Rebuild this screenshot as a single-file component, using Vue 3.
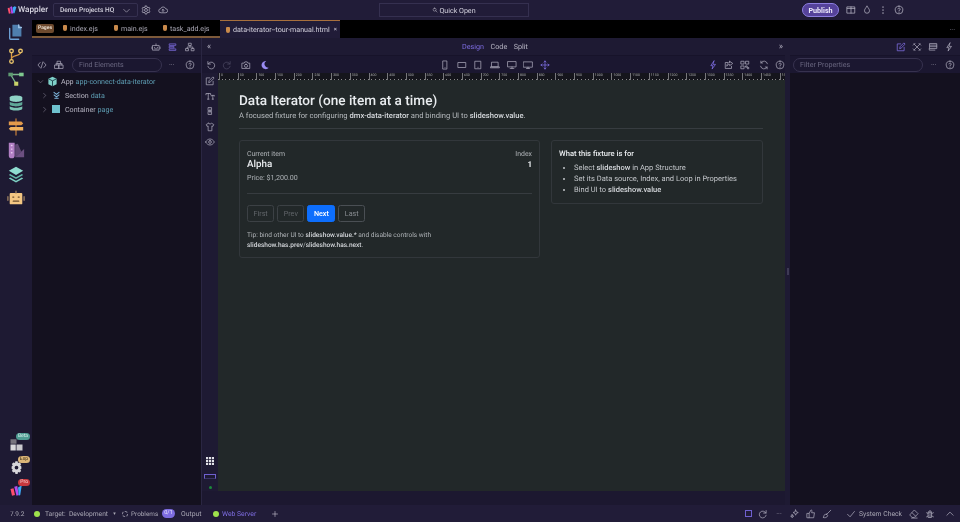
<template>
  <div class="app">
    <header class="topbar">
      <div class="brand">
        <svg class="logo" viewBox="0 0 16 16" aria-hidden="true">
          <path d="M1 5l3-1 2 9-3 1z" fill="#ff4f6d" />
          <path d="M5 3l3-1 2 11-3 1z" fill="#b44cf0" />
          <path d="M9 4l3-2 3 1-3 10-2 0z" fill="#3ca8f5" />
        </svg>
        <span>Wappler</span>
      </div>
      <div class="project">
        <span>Demo Projects HQ</span>
        <Ico name="chevron" class="project-chevron" />
      </div>
      <Ico name="gear" class="top-icon gear" />
      <Ico name="cloud" class="top-icon cloud" />
      <div class="quick-open">
        <Ico name="search" class="quick-icon" />
        <span>Quick Open</span>
      </div>
      <button class="publish">Publish</button>
      <Ico name="layout" class="top-icon pub-first" />
      <Ico name="drop" class="top-icon pub-next" />
      <Ico name="kebab" class="top-icon pub-next" />
      <Ico name="help" class="top-icon pub-next" />
    </header>

    <div class="workspace">
      <nav class="rail">
        <div v-for="item in railTop" :key="item.name" class="rail-cell">
          <svg viewBox="0 0 20 20" class="rail-icon" aria-hidden="true">
            <path v-for="p in item.paths" :key="p.d" :d="p.d" :fill="p.fill || 'none'" :stroke="p.stroke || 'none'" stroke-width="1.5" stroke-linecap="round" />
          </svg>
        </div>
        <div class="rail-gap"></div>
        <div v-for="item in railBottom" :key="item.name" class="rail-cell rail-cell-low">
          <svg viewBox="0 0 20 20" class="rail-icon" aria-hidden="true">
            <path v-for="p in item.paths" :key="p.d" :d="p.d" :fill="p.fill || 'none'" :stroke="p.stroke || 'none'" stroke-width="1.5" stroke-linecap="round" fill-rule="evenodd" />
          </svg>
          <span class="rail-badge" :class="item.badgeClass">{{ item.badge }}</span>
        </div>
      </nav>

      <div class="main">
        <div class="tabs">
          <div class="tabs-files">
            <span class="pages-badge">Pages</span>
            <span v-for="tab in tabs" :key="tab.name" class="tab" :style="{ width: tab.width + 'px' }">
              <i class="file-icon"></i>{{ tab.name }}
            </span>
          </div>
          <div class="tab-active">
            <i class="file-icon"></i>
            <span>data-iterator--tour-manual.html</span>
            <span class="tab-close">×</span>
          </div>
          <span class="tabs-more">···</span>
        </div>

        <div class="columns">
          <aside class="left-panel">
            <div class="head-row left-icons">
              <Ico name="robot" class="head-icon" />
              <Ico name="list" class="head-icon accent-icon" />
              <Ico name="sitemap" class="head-icon" />
            </div>
            <div class="tool-row">
              <Ico name="code" class="head-icon code-icon" />
              <Ico name="boxes" class="head-icon" />
              <div class="filter find">Find Elements</div>
              <span class="more">···</span>
              <Ico name="help" class="head-icon" />
            </div>
            <ul class="tree">
              <li class="tree-row">
                <Ico name="chevron" class="tree-chevron" />
                <svg class="tree-icon app-icon" viewBox="0 0 16 16" aria-hidden="true">
                  <path d="M8 1l6 3v8l-6 3-6-3V4z" fill="#7fd1c9" />
                  <path d="M2 4l6 3 6-3M8 7v8" fill="none" stroke="#14303a" stroke-width="1.2" />
                </svg>
                <span>App</span> <span class="tree-id">app-connect-data-iterator</span>
              </li>
              <li class="tree-row nested">
                <Ico name="chevronRight" class="tree-chevron" />
                <Ico name="section" class="tree-icon section-icon" />
                <span>Section</span> <span class="tree-id">data</span>
              </li>
              <li class="tree-row nested">
                <Ico name="chevronRight" class="tree-chevron" />
                <i class="container-box"></i>
                <span>Container</span> <span class="tree-id">page</span>
              </li>
            </ul>
          </aside>

          <section class="center">
            <div class="head-row center-head">
              <span class="collapse">«</span>
              <div class="view-modes">
                <span class="mode-active">Design</span>
                <span>Code</span>
                <span>Split</span>
              </div>
              <span class="collapse">»</span>
            </div>
            <div class="tool-row center-tools">
              <Ico name="undo" class="tool-icon undo" />
              <Ico name="redo" class="tool-icon redo" />
              <Ico name="camera" class="tool-icon camera" />
              <svg class="tool-icon moon" viewBox="0 0 16 16" aria-hidden="true">
                <path d="M10 1.5a6.6 6.6 0 1 0 4 11A6 6 0 0 1 10 1.5z" fill="#9a8cf2" />
              </svg>
              <div class="devices">
                <Ico v-for="d in devices" :key="d" :name="d" class="tool-icon device" :class="{ 'device-on': d === 'move' }" />
              </div>
              <div class="tools-right">
                <Ico name="bolt" class="tool-icon device-on" />
                <Ico name="share" class="tool-icon" />
                <Ico name="qr" class="tool-icon" />
                <Ico name="refresh" class="tool-icon refresh" />
                <Ico name="help" class="tool-icon" />
              </div>
            </div>

            <div class="stage">
              <div class="side-tools">
                <Ico name="edit" class="side-icon device-on" />
                <Ico name="text" class="side-icon" />
                <Ico name="link" class="side-icon" />
                <Ico name="shirt" class="side-icon" />
                <Ico name="eye" class="side-icon" />
                <div class="side-gap"></div>
                <svg class="side-grid" viewBox="0 0 9 9" aria-hidden="true">
                  <path d="M0 0h2.4v2.4H0zM3.3 0h2.4v2.4H3.3zM6.6 0H9v2.4H6.6zM0 3.3h2.4v2.4H0zM3.3 3.3h2.4v2.4H3.3zM6.6 3.3H9v2.4H6.6zM0 6.6h2.4V9H0zM3.3 6.6h2.4V9H3.3zM6.6 6.6H9V9H6.6z" fill="#e2e2e8" />
                </svg>
                <i class="side-bar"></i>
                <i class="side-dot"></i>
              </div>

              <div class="canvas-wrap">
                <div class="ruler">
                  <span v-for="mark in rulerMarks" :key="mark" class="ruler-mark">{{ mark }}</span>
                </div>
                <div class="canvas">
                  <h1>Data Iterator (one item at a time)</h1>
                  <p class="lead">A focused fixture for configuring <b>dmx-data-iterator</b> and binding UI to <b>slideshow.value</b>.</p>
                  <hr class="rule" />
                  <div class="cards">
                    <article class="card card-main">
                      <div class="item-head">
                        <div>
                          <div class="muted">Current item</div>
                          <div class="item-name">Alpha</div>
                          <div class="muted price">Price: $1,200.00</div>
                        </div>
                        <div class="item-index">
                          <div class="muted">Index</div>
                          <div class="index-value">1</div>
                        </div>
                      </div>
                      <hr class="rule card-rule" />
                      <div class="pager">
                        <button class="btn" disabled>First</button>
                        <button class="btn" disabled>Prev</button>
                        <button class="btn btn-primary">Next</button>
                        <button class="btn btn-last">Last</button>
                      </div>
                      <p class="tip">Tip: bind other UI to <b>slideshow.value.*</b> and disable controls with <b>slideshow.has.prev</b>/<b>slideshow.has.next</b>.</p>
                    </article>
                    <article class="card card-side">
                      <div class="side-title">What this fixture is for</div>
                      <ul>
                        <li>Select <b>slideshow</b> in App Structure</li>
                        <li>Set its Data source, Index, and Loop in Properties</li>
                        <li>Bind UI to <b>slideshow.value</b></li>
                      </ul>
                    </article>
                  </div>
                </div>
              </div>
            </div>
            <div class="center-foot"></div>
          </section>

          <div class="splitter"><i></i></div>

          <aside class="right-panel">
            <div class="head-row right-icons">
              <Ico name="edit" class="head-icon device-on" />
              <Ico name="tools" class="head-icon" />
              <Ico name="server" class="head-icon" />
              <Ico name="bolt" class="head-icon" />
            </div>
            <div class="tool-row">
              <div class="filter props">Filter Properties</div>
              <span class="more">···</span>
              <Ico name="help" class="head-icon" />
            </div>
          </aside>
        </div>
      </div>
    </div>

    <footer class="status">
      <span class="version">7.9.2</span>
      <i class="dot"></i>
      <span class="target">Target:&nbsp; Development</span>
      <span class="caret">▾</span>
      <i class="spinner"></i>
      <span class="problems">Problems</span>
      <span class="count">0/1</span>
      <span class="output">Output</span>
      <i class="dot dot-server"></i>
      <span class="server">Web Server</span>
      <Ico name="plus" class="status-plus" />
      <div class="status-right">
        <i class="status-square"></i>
        <Ico name="redo" class="status-icon" />
        <span class="more">···</span>
        <Ico name="sparkle" class="status-icon" />
        <Ico name="thumb" class="status-icon" />
        <Ico name="brush" class="status-icon" />
        <Ico name="check" class="status-icon check" />
        <span class="system">System Check</span>
        <Ico name="eraser" class="status-icon" />
        <Ico name="bug" class="status-icon" />
        <Ico name="chevronUp" class="status-icon caret-up" />
      </div>
    </footer>
  </div>
</template>

<script setup>
import { h } from "vue";

const icons = {
  chevron: "M3 6l5 5 5-5",
  chevronRight: "M6 3l5 5-5 5",
  chevronUp: "M3 10l5-5 5 5",
  gear: "M8 5.6a2.4 2.4 0 1 0 0 4.8 2.4 2.4 0 0 0 0-4.8zM6.8 1.5h2.4l.4 2 1.6.9 1.9-.7 1.2 2.1-1.5 1.3v1.8l1.5 1.3-1.2 2.1-1.9-.7-1.6.9-.4 2H6.8l-.4-2-1.6-.9-1.9.7-1.2-2.1 1.5-1.3V7.1L1.7 5.8l1.2-2.1 1.9.7 1.6-.9z",
  cloud: "M4.5 12.5a3.2 3.2 0 0 1-.3-6.4A4.2 4.2 0 0 1 12.2 6a3.2 3.2 0 0 1 0 6.5zM8 11V7M6.4 8.6 8 7l1.6 1.6",
  search: "M7 3a4 4 0 1 0 0 8 4 4 0 0 0 0-8zM10 10l3.5 3.5",
  layout: "M2 3h12v10H2zM8 3v10M2 5.5h12",
  drop: "M8 2c2.5 3.2 4 5.2 4 7.2a4 4 0 0 1-8 0C4 7.2 5.5 5.2 8 2z",
  kebab: "M8 3v.5M8 7.8v.5M8 12.5v.5",
  help: "M8 1.8a6.2 6.2 0 1 0 0 12.4 6.2 6.2 0 0 0 0-12.4zM6.2 6.3A1.9 1.9 0 1 1 8 8.6v1M8 11.6v.3",
  robot: "M3 5.5h10v7.5H3zM8 5.5V3M5.8 8.5v.6M10.2 8.5v.6M6 11h4M1.5 8v2.5M14.5 8v2.5",
  list: "M2.5 3h10v2.4h-10zM2.5 7h7v2.4h-7zM2.5 11h10v2.4h-10z",
  sitemap: "M6 2h4v3.5H6zM1.5 10.5h4V14h-4zM10.5 10.5h4V14h-4zM8 5.5V8M3.5 10.5V8h9v2.5",
  code: "M5 4 1.5 8 5 12M11 4l3.5 4-3.5 4M9.5 3l-3 10",
  boxes: "M5.5 2h5v4h-5zM1.5 8h6.5v5.5H1.5zM8 8h6.5v5.5H8zM3.5 6v2M12.5 6v2M3.5 6h9",
  section: "M3.5 2.5 8 6l4.5-3.5M3.5 7 8 10.5 12.5 7M5 13h6",
  undo: "M3 2.5v4h4M3.4 6.5A5.5 5.5 0 1 1 3 10",
  redo: "M13 2.5v4H9M12.6 6.5A5.5 5.5 0 1 0 13 10",
  camera: "M2 5h3l1-2h4l1 2h3v8.5H2zM8 6.8a2.5 2.5 0 1 0 0 5 2.5 2.5 0 0 0 0-5z",
  phone: "M5 1.5h6v13H5zM8 12.3v.2",
  tabletWide: "M2 4h12v8H2z",
  tablet: "M3.5 2h9v12h-9zM8 11.6v.2",
  laptop: "M3 3.5h10v7.5H3zM1 11h14v1.5H1z",
  desktop: "M1.5 2.5h13v8.5h-13zM8 11v2.5M5 13.5h6",
  monitor: "M1 3h14v8.5H1zM8 11.5v2M5.5 13.5h5",
  move: "M8 1.5v13M1.5 8h13M6.3 3.2 8 1.5l1.7 1.7M6.3 12.8 8 14.5l1.7-1.7M3.2 6.3 1.5 8l1.7 1.7M12.8 6.3 14.5 8l-1.7 1.7",
  bolt: "M9.5 1.5 4.5 9H8l-1.5 5.5L12 7H8.5z",
  share: "M6 4H2v9.5h10V10M9 2l5 3.5L9 9V7C7 7 5.5 8 4.5 10c0-3.5 1.5-5.5 4.5-6z",
  qr: "M2 2h4.5v4.5H2zM9.5 2H14v4.5H9.5zM2 9.5h4.5V14H2zM9.5 9.5h2v2h-2zM12.5 12h1.5v2h-1.5z",
  refresh: "M13.5 6A5.8 5.8 0 0 0 3 4.5M2.5 10A5.8 5.8 0 0 0 13 11.5M3 1.8v2.9h2.9M13 14.2v-2.9h-2.9",
  edit: "M13 8.5V14H2V3h5.5M6 10l.6-2.6 6-6 2 2-6 6z",
  text: "M1.5 6V4h7.5v2M5.2 4v9M4 13h2.5M10 8V7h5v1M12.5 7v6M11.5 13h2",
  link: "M5.5 2.5h5v5h-5zM5.5 8.5h5v5h-5zM8 5v6",
  shirt: "M5.5 2 2 4l1.3 3 1.7-.7V14h6V6.3l1.7.7L14 4l-3.5-2c-.5 1.6-4.5 1.6-5 0z",
  eye: "M1 8c2-3.2 4.3-4.8 7-4.8s5 1.6 7 4.8c-2 3.2-4.3 4.8-7 4.8S3 11.2 1 8zM8 5.8a2.2 2.2 0 1 0 0 4.4 2.2 2.2 0 0 0 0-4.4z",
  tools: "M3 3l10 10M13 3 3 13M2 5l3-3M11 14l3-3M11 2l3 3M2 11l3 3",
  server: "M3 2.5h11v8H3zM3 5h11M3 7.5h11M2 10.5V13h9",
  plus: "M8 3v10M3 8h10",
  sparkle: "M9 1.5l1.2 3 3 1.2-3 1.2-1.2 3-1.2-3-3-1.2 3-1.2zM3.5 9l.7 1.8 1.8.7-1.8.7-.7 1.8-.7-1.8L1 11.5l1.8-.7z",
  thumb: "M2 7h3v7H2zM5 7l3-5.5c1.2 0 1.8 1 1.5 2.2L9 6h4.5l-1.2 8H5",
  brush: "M14 2 7.5 8.5M7.5 8.5c-2.5-.5-4.5 1-4.5 2.5 0 1-.5 2-1.5 2.5 3 1 6.5.3 7.5-2.5.2-.8-.5-2-1.5-2.5z",
  check: "M2.5 8.5 6.5 12.5 13.5 4",
  eraser: "M9 2 14.5 7.5 8.5 13.5H5L1.5 10zM5 6l5.5 5.5M4 14.5h9",
  bug: "M5.5 5h5v8.5h-5zM6 5c0-3.5 4-3.5 4 0M8 5v8.5M5.5 7.5 2.5 6M10.5 7.5l3-1.5M5.5 11l-3 1.5M10.5 11l3 1.5",
};

// stroke icon on a 16 unit grid, colour comes from the class
const Ico = (props) =>
  h(
    "svg",
    {
      viewBox: "0 0 16 16",
      fill: "none",
      stroke: "currentColor",
      "stroke-width": props.name === "kebab" ? 2 : 1.2,
      "stroke-linecap": "round",
      "stroke-linejoin": "round",
      "aria-hidden": "true",
    },
    h("path", { d: icons[props.name] })
  );
Ico.props = ["name"];

const railTop = [
  {
    name: "files",
    paths: [
      { d: "M3 6v11a1 1 0 0 0 1 1h9", stroke: "#6fa3d8" },
      { d: "M6 2h7l3 3v10H6z", fill: "#4f7fae" },
      { d: "M13 2v3h3", stroke: "#9cc3e6" },
    ],
  },
  {
    name: "git",
    paths: [
      { d: "M5 6v8M15 6c0 4-10 3-10 7", stroke: "#d99a45" },
      { d: "M5 2.5a2 2 0 1 1 0 4 2 2 0 0 1 0-4zM15 2.5a2 2 0 1 1 0 4 2 2 0 0 1 0-4zM5 14a2 2 0 1 1 0 4 2 2 0 0 1 0-4z", stroke: "#e8c36a" },
    ],
  },
  {
    name: "graph",
    paths: [
      { d: "M4 5h12M4 5l6 10", stroke: "#78b58c" },
      { d: "M1.5 3h5v4h-5z", fill: "#5f9c72" },
      { d: "M13.5 3h5v4h-5z", fill: "#7fc98f" },
      { d: "M8 13h4.5v4.5H8z", fill: "#c9d36a" },
    ],
  },
  {
    name: "database",
    paths: [
      { d: "M3 4c0-3 14-3 14 0v2.5c0 3-14 3-14 0z", fill: "#8fd3c6" },
      { d: "M3 8.5c3 2.2 11 2.2 14 0v3c0 3-14 3-14 0z", fill: "#5fa898" },
      { d: "M3 13.5c3 2.2 11 2.2 14 0V16c0 3-14 3-14 0z", fill: "#7cc4b4" },
    ],
  },
  {
    name: "signs",
    paths: [
      { d: "M10 1v18", stroke: "#b8763a" },
      { d: "M2 4h14l2 2-2 2H2z", fill: "#e39a4b" },
      { d: "M18 10H4l-2 2 2 2h14z", fill: "#f0b25f" },
    ],
  },
  {
    name: "palette",
    paths: [
      { d: "M9 4l3-1 4 9-7 6z", fill: "#5e4672" },
      { d: "M9 18l10-9v9z", fill: "#6b4f80" },
      { d: "M2 2h6.5v14a3.2 3.2 0 0 1-6.5 0z", fill: "#b27fc4" },
      { d: "M5 5h.5M5 9h.5M5 13h.5", stroke: "#e7cdef" },
    ],
  },
  {
    name: "layers",
    paths: [
      { d: "M10 2l8 4.5-8 4.5-8-4.5z", fill: "#8fdcd0" },
      { d: "M3.5 10 10 13.5 16.5 10 18 11l-8 4.5L2 11z", fill: "#63b5a8" },
      { d: "M3.5 14 10 17.500 16.500 14 18 15l-8 4.500L2 15z", fill: "#7ccfc2" },
    ],
  },
  {
    name: "bot",
    paths: [
      { d: "M4 4.5h12a1 1 0 0 1 1 1V16a1 1 0 0 1-1 1H4a1 1 0 0 1-1-1V5.500a1 1 0 0 1 1-1z", fill: "#f4c783" },
      { d: "M10 4.5V2.5M1 8.5v4M19 8.500v4", stroke: "#9a7e60" },
      { d: "M6.5 9h1M12.5 9h1M7 13.5h6", stroke: "#6a4d2c" },
    ],
  },
];

const railBottom = [
  {
    name: "extensions",
    badge: "Beta",
    badgeClass: "badge-beta",
    paths: [
      { d: "M2 3h8v6H2z", fill: "#77747f" },
      { d: "M2 10h7v8H2z", fill: "#d8d8dc" },
      { d: "M10 10h8v8h-8z", fill: "#c9c9ce" },
    ],
  },
  {
    name: "settings",
    badge: "Exp",
    badgeClass: "badge-exp",
    paths: [
      {
        d: "M10 7.5a2.5 2.5 0 1 0 0 5 2.5 2.5 0 0 0 0-5zM8.5 1.5h3l.5 2.5 2-.8 2.2 2-1.2 2 1.5 1.300v3l-1.500 1.300 1.200 2-2.200 2-2-.8-.5 2.500h-3l-.5-2.500-2 .8-2.200-2 1.200-2-1.500-1.300v-3l1.500-1.300-1.200-2 2.200-2 2 .8z",
        fill: "#d6d6da",
      },
    ],
  },
  {
    name: "pro",
    badge: "Pro",
    badgeClass: "badge-pro",
    paths: [
      { d: "M2 8l4-1 2 9-4 1z", fill: "#ff4f6d" },
      { d: "M7 5l4-1 2 12-3 1z", fill: "#b44cf0" },
      { d: "M12 6l5-3-2 13-2 1z", fill: "#3ca8f5" },
    ],
  },
];

const tabs = [
  { name: "index.ejs", width: 51 },
  { name: "main.ejs", width: 49 },
  { name: "task_add.ejs", width: 55 },
];

const devices = ["phone", "tabletWide", "tablet", "laptop", "desktop", "monitor", "move"];

const rulerMarks = Array.from({ length: 31 }, (_, i) => i * 50);
</script>

<style>
html,
body {
  margin: 0;
  background: #14111f;
}
</style>

<style scoped>
.app {
  width: 960px;
  height: 522px;
  display: flex;
  flex-direction: column;
  overflow: hidden;
  background: #14111f;
  color: #c9c7d4;
  font-family: Roboto, "Noto Sans", sans-serif;
  font-size: 7.1px;
  white-space: nowrap;
  text-rendering: geometricPrecision;
  will-change: transform;
}

svg {
  display: block;
  flex: none;
}

/* top bar */
.topbar {
  height: 20px;
  flex: none;
  display: flex;
  align-items: center;
  background: #211c38;
}

.brand {
  width: 53px;
  flex: none;
  display: flex;
  align-items: center;
  gap: 1px;
  padding-left: 7px;
  box-sizing: border-box;
  font-size: 8.2px;
  font-weight: 500;
  color: #d8d6e2;
}

.logo {
  width: 10px;
  height: 10px;
}

.project {
  width: 85px;
  height: 14px;
  box-sizing: border-box;
  border: 1px solid #353050;
  border-radius: 2px;
  display: flex;
  align-items: center;
  justify-content: space-between;
  padding: 0 6px;
  font-size: 6.6px;
  font-weight: 500;
  color: #d4d2de;
}

.project-chevron {
  width: 9px;
  height: 9px;
  color: #aaa7b8;
}

.top-icon {
  width: 10px;
  height: 10px;
  color: #b4b2c2;
}

.gear {
  margin-left: 3px;
}

.cloud {
  margin-left: 7px;
}

.quick-open {
  width: 150px;
  height: 14px;
  margin-left: 211px;
  box-sizing: border-box;
  border: 1px solid #353050;
  display: flex;
  align-items: center;
  justify-content: center;
  gap: 1px;
  color: #d4d2de;
}

.quick-icon {
  width: 6px;
  height: 6px;
}

.publish {
  width: 37px;
  height: 14px;
  margin-left: 273px;
  padding: 0;
  border: 1px solid #8d7ee0;
  border-radius: 8px;
  background: #55429a;
  color: #ece9fa;
  font-family: inherit;
  font-size: 7.2px;
  font-weight: 700;
}

.pub-first {
  margin-left: 7px;
}

.pub-next {
  margin-left: 6px;
}

/* rail */
.workspace {
  flex: 1;
  min-height: 0;
  display: flex;
}

.rail {
  width: 32px;
  flex: none;
  display: flex;
  flex-direction: column;
  align-items: center;
  padding-bottom: 3px;
  box-sizing: border-box;
  background: #1e1a33;
}

.rail-cell {
  height: 23.7px;
  width: 100%;
  flex: none;
  display: flex;
  align-items: center;
  justify-content: center;
  position: relative;
}

.rail-cell-low {
  height: 23px;
}

.rail-icon {
  width: 18px;
  height: 18px;
}

.rail-cell-low .rail-icon {
  width: 15px;
  height: 15px;
}

.rail-gap {
  flex: 1;
}

.rail-badge {
  position: absolute;
  top: 0;
  right: 2px;
  padding: 0 2px;
  border-radius: 4px;
  font-size: 5px;
  line-height: 7px;
}

.badge-beta {
  background: #4f9c93;
  color: #d7f0ec;
}

.badge-exp {
  background: #dcb679;
  color: #3d2e14;
}

.badge-pro {
  background: #c8383e;
  color: #fbdada;
}

/* tabs */
.main {
  flex: 1;
  min-width: 0;
  display: flex;
  flex-direction: column;
}

.tabs {
  height: 18px;
  flex: none;
  display: flex;
  background: #000;
}

.tabs-files {
  width: 188px;
  flex: none;
  box-sizing: border-box;
  display: flex;
  align-items: center;
  padding-left: 4px;
  border-bottom: 2px solid #7d5a3a;
  color: #a9a7b4;
}

.pages-badge {
  width: 18px;
  height: 9px;
  line-height: 9px;
  margin-right: 9px;
  border-radius: 2px;
  background: #6d4a2e;
  color: #eadfd0;
  font-size: 5px;
  font-weight: 700;
  text-align: center;
}

.tab {
  display: flex;
  align-items: center;
  gap: 3px;
}

.file-icon {
  width: 4px;
  height: 6px;
  flex: none;
  border-radius: 1px 1px 2px 2px;
  background: #c98a4b;
}

.tab-active {
  width: 120px;
  flex: none;
  box-sizing: border-box;
  display: flex;
  align-items: center;
  gap: 3px;
  padding-left: 6px;
  border-top: 1px solid #a8703d;
  background: #211c38;
  color: #d4d2de;
}

.tab-close {
  margin-left: 1px;
  font-size: 6px;
}

.tabs-more {
  margin-left: auto;
  margin-right: 5px;
  align-self: center;
  color: #8d8a9c;
}

/* panels */
.columns {
  flex: 1;
  min-height: 0;
  display: flex;
}

.left-panel {
  width: 170px;
  flex: none;
  border-right: 1px solid #2a2642;
  box-sizing: border-box;
}

.head-row {
  height: 18px;
  display: flex;
  align-items: center;
  box-sizing: border-box;
  background: #1e1a33;
  border-bottom: 1px solid #17132a;
}

.tool-row {
  height: 17px;
  display: flex;
  align-items: center;
  box-sizing: border-box;
  background: #1b1730;
}

.left-icons {
  justify-content: flex-end;
  gap: 7px;
  padding-right: 6px;
}

.head-icon {
  width: 10px;
  height: 10px;
  color: #aaa7b8;
}

.accent-icon {
  color: #7d6ce0;
}

.code-icon {
  margin-left: 5px;
  margin-right: 7px;
}

.filter {
  height: 14px;
  line-height: 12px;
  box-sizing: border-box;
  border: 1px solid #37324f;
  border-radius: 7px;
  padding: 0 6px;
  color: #6a6780;
}

.find {
  width: 90px;
  margin-left: 8px;
}

.more {
  color: #9b98aa;
  font-size: 7px;
}

.left-panel .more {
  margin-left: 7px;
  margin-right: 10px;
}

.tree {
  list-style: none;
  margin: 0;
  padding: 1px 0 0 5px;
}

.tree-row {
  height: 14.2px;
  display: flex;
  align-items: center;
  gap: 2px;
  color: #b8b6c4;
}

.tree-row.nested {
  padding-left: 4px;
}

.tree-chevron {
  width: 7px;
  height: 7px;
  color: #8f8ca0;
  margin-right: 1px;
}

.tree-icon {
  width: 9px;
  height: 9px;
}

.app-icon {
  width: 11px;
  height: 11px;
  margin-right: 1px;
}

.section-icon {
  color: #7fb8e0;
  stroke-width: 1.8;
  margin-right: 2px;
  margin-left: 1px;
}

.container-box {
  width: 8px;
  height: 8px;
  margin: 0 3px 0 1px;
  background: #6fc2cf;
}

.tree-id {
  color: #5f9fb5;
}

/* center */
.center {
  width: 583px;
  flex: none;
  display: flex;
  flex-direction: column;
  background: #1e1a33;
}

.center-head {
  justify-content: space-between;
  padding: 0 2px 0 5px;
  color: #b8b6c4;
}

.collapse {
  font-size: 9px;
  color: #aaa7b8;
}

.view-modes {
  display: flex;
  gap: 6.5px;
  font-size: 7.2px;
}

.mode-active {
  color: #7d6ce0;
}

.center-tools {
  padding-left: 4px;
}

.tool-icon {
  width: 10px;
  height: 10px;
  color: #aaa7b8;
}

.redo {
  margin-left: 6px;
  color: #4a4760;
}

.camera {
  margin-left: 9px;
}

.moon {
  margin-left: 9px;
}

.devices {
  display: flex;
  gap: 6.7px;
  margin-left: 170px;
}

.device-on {
  color: #8070e6;
}

.tools-right {
  margin-left: auto;
  display: flex;
  gap: 6px;
}

.refresh {
  margin-left: 3px;
}

.stage {
  flex: 1;
  min-height: 0;
  display: flex;
}

.side-tools {
  width: 16px;
  flex: none;
  display: flex;
  flex-direction: column;
  align-items: center;
  gap: 5.2px;
  padding: 3px 0 2.5px;
  box-sizing: border-box;
  background: #1e1a33;
}

.side-icon {
  width: 10px;
  height: 10px;
  color: #aaa7b8;
}

.side-gap {
  flex: 1;
}

.side-grid {
  width: 8px;
  height: 8px;
}

.side-bar {
  width: 10px;
  height: 3px;
  margin-top: 4px;
  border: 1px solid #6f60d0;
  border-bottom-color: #3a3366;
  flex: none;
}

.side-dot {
  width: 3px;
  height: 3px;
  margin-top: 1.5px;
  flex: none;
  border-radius: 50%;
  background: #1b8a3b;
}

.canvas-wrap {
  width: 567px;
  flex: none;
  display: flex;
  flex-direction: column;
  background: #212529;
}

.ruler {
  height: 7px;
  flex: none;
  display: flex;
  overflow: hidden;
  padding-left: 1px;
  background:
    repeating-linear-gradient(90deg, #8a8a8a 0 1px, transparent 1px 3.74px) 0 bottom / 100% 1px no-repeat,
    #15151c;
}

.ruler-mark {
  width: 18.7px;
  flex: none;
  box-sizing: border-box;
  border-left: 1px solid #77777c;
  padding-left: 1px;
  font-size: 3.5px;
  line-height: 5px;
  color: #a8a8ac;
}

.canvas {
  flex: 1;
  min-height: 0;
  padding: 13px 22px 0 21px;
  background: #222829;
  color: #dee2e6;
}

h1 {
  margin: 0;
  font-size: 13.6px;
  font-weight: 500;
  line-height: 17px;
  color: #e9ecef;
}

.lead {
  margin: 1px 0 0;
  font-size: 7.6px;
  line-height: 10px;
  color: #b5b9bd;
}

.lead b,
.tip b,
.card li b {
  font-weight: 500;
  color: #d5d8dc;
}

.rule {
  border: 0;
  border-top: 1px solid #373c40;
  margin: 7px 0 0;
}

.cards {
  display: flex;
  gap: 11px;
  margin-top: 11px;
}

.card {
  box-sizing: border-box;
  border: 1px solid #32373b;
  border-radius: 3px;
}

.card-main {
  width: 301px;
  height: 118px;
  padding: 8px 7px 7px;
}

.card-side {
  width: 212px;
  height: 64px;
  padding: 8px 7px 7px;
}

.item-head {
  display: flex;
  justify-content: space-between;
}

.muted {
  color: #b0b4b8;
  font-size: 6.9px;
  line-height: 10px;
}

.item-name {
  font-size: 9.8px;
  font-weight: 500;
  line-height: 12px;
  color: #e9ecef;
}

.price {
  margin-top: 2px;
  font-size: 7.1px;
}

.item-index {
  text-align: right;
}

.index-value {
  font-size: 8px;
  font-weight: 700;
  line-height: 12px;
  color: #e9ecef;
}

.card-rule {
  margin: 10px 0 0;
}

.pager {
  display: flex;
  gap: 3px;
  margin-top: 11px;
}

.btn {
  height: 17px;
  padding: 0 5.5px;
  box-sizing: border-box;
  border: 1px solid #3c4145;
  border-radius: 2.5px;
  background: transparent;
  color: #62666b;
  font-family: inherit;
  font-size: 7.2px;
}

.btn-primary {
  border-color: #0d6efd;
  background: #0d6efd;
  color: #fff;
  font-weight: 500;
}

.btn-last {
  color: #8a8e93;
  border-color: #4a4f54;
}

.tip {
  margin: 8px 0 0;
  font-size: 6.55px;
  line-height: 10px;
  color: #b0b4b8;
  white-space: normal;
}

.side-title {
  font-size: 7.6px;
  font-weight: 500;
  line-height: 10px;
  color: #e9ecef;
}

.card-side ul {
  margin: 3px 0 0;
  padding-left: 15px;
  font-size: 7.5px;
  line-height: 11.2px;
  color: #c3c6ca;
}

.center-foot {
  height: 14px;
  flex: none;
  background: #1c1830;
}

.splitter {
  width: 5px;
  flex: none;
  display: flex;
  align-items: center;
  justify-content: center;
  background: #1e1a33;
}

.splitter i {
  width: 2px;
  height: 7px;
  background: #3d3954;
}

.right-panel {
  width: 170px;
  flex: none;
  background: #14111f;
}

.right-icons {
  justify-content: flex-end;
  gap: 6px;
  padding-right: 6px;
}

.props {
  width: 130px;
  margin-left: 3px;
}

.right-panel .more {
  margin-left: 8px;
  margin-right: 8px;
}

/* status bar */
.status {
  height: 17px;
  flex: none;
  display: flex;
  align-items: center;
  background: #211c38;
  color: #a9a7b4;
  font-size: 6.8px;
}

.version {
  margin-left: 10px;
  width: 24px;
  font-size: 6.5px;
}

.dot {
  width: 6px;
  height: 6px;
  flex: none;
  border-radius: 50%;
  background: #9ee24c;
}

.target {
  width: 63px;
  margin-left: 5px;
  font-size: 6.7px;
}

.caret {
  width: 11px;
  margin-left: 1px;
  font-size: 5px;
  text-align: center;
}

.spinner {
  width: 6px;
  height: 6px;
  flex: none;
  box-sizing: border-box;
  margin-left: 2px;
  margin-right: 3px;
  border: 1px dashed #8d8a9c;
  border-radius: 50%;
}

.problems {
  width: 28px;
  font-size: 6.4px;
}

.count {
  margin-left: 3px;
  width: 13px;
  height: 9px;
  line-height: 9px;
  border-radius: 5px;
  background: #7d6ce0;
  color: #e8e4fb;
  font-size: 5.5px;
  text-align: center;
}

.output {
  width: 24px;
  margin-left: 6px;
}

.dot-server {
  margin-left: 8px;
}

.server {
  width: 36px;
  margin-left: 3px;
  color: #7d6ce0;
}

.status-plus {
  width: 8px;
  height: 8px;
  margin-left: 13px;
  color: #c9c7d4;
}

.status-right {
  margin-left: auto;
  display: flex;
  align-items: center;
  gap: 6px;
  padding-right: 5px;
}

.status-square {
  width: 7px;
  height: 7px;
  box-sizing: border-box;
  border: 1px solid #6f60d0;
}

.status-icon {
  width: 10px;
  height: 10px;
  color: #aaa7b8;
}

.status .more {
  width: 10px;
  text-align: center;
}

.check {
  margin-left: 8px;
}

.system {
  width: 41px;
  margin-left: -3px;
  margin-right: 3px;
}

.caret-up {
  margin-left: 4px;
}
</style>
